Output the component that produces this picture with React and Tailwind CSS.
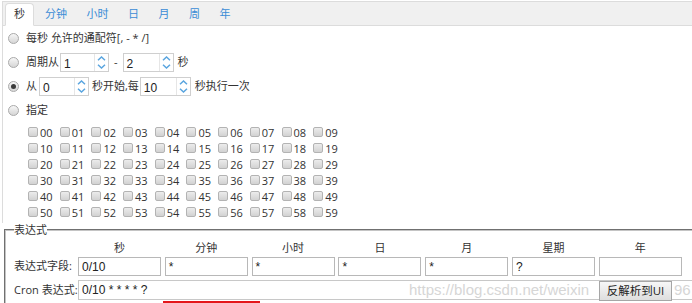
import React from 'react'

const tabs = ['秒', '分钟', '小时', '日', '月', '周', '年']
const fields = [
  { title: '秒', value: '0/10' },
  { title: '分钟', value: '*' },
  { title: '小时', value: '*' },
  { title: '日', value: '*' },
  { title: '月', value: '*' },
  { title: '星期', value: '?' },
  { title: '年', value: '' },
]

function Radio({ checked }) {
  return (
    <span className="flex h-[11px] w-[11px] shrink-0 items-center justify-center rounded-full border border-[#a9a9a9] bg-gradient-to-b from-[#f6f6f6] to-[#d6d6d6]">
      {checked && <span className="h-[5px] w-[5px] rounded-full bg-[#3a3a3a]" />}
    </span>
  )
}

function Spinner({ value, width = 'w-[50px]' }) {
  return (
    <div className={`flex h-[19px] ${width} border border-[#cfcfcf] bg-white`}>
      <span className="flex-1 pl-[3px] pt-[4px] font-['Liberation_Sans',sans-serif] text-[12px] leading-[12px] text-[#222]">
        {value}
      </span>
      <span className="flex w-[14px] flex-col items-center justify-between border-l border-[#e6e6e6] py-[2px]">
        <svg width="9" height="5" viewBox="0 0 9 5" fill="none">
          <path d="M1 4.2 L4.5 1 L8 4.2" stroke="#5aa5df" strokeWidth="1.5" />
        </svg>
        <svg width="9" height="5" viewBox="0 0 9 5" fill="none">
          <path d="M1 0.8 L4.5 4 L8 0.8" stroke="#5aa5df" strokeWidth="1.5" />
        </svg>
      </span>
    </div>
  )
}

function Check({ label }) {
  return (
    <label className="flex h-4 w-[31.7px] shrink-0 items-center gap-[2px]">
      <span className="h-[10px] w-[10px] shrink-0 rounded-[2px] border border-[#b3b3b3] bg-gradient-to-b from-[#ececec] to-[#d2d2d2]" />
      <span className="text-[11px] leading-none">{label}</span>
    </label>
  )
}

function FieldBox({ value }) {
  return (
    <div className="h-[19px] w-[83px] shrink-0 border border-[#b8b8b8] bg-white pl-[3px] pt-[2px] font-['Liberation_Sans',sans-serif] text-[12px] leading-[14px] text-[#222]">
      {value}
    </div>
  )
}

export default function App() {
  const rows = [0, 1, 2, 3, 4, 5]

  return (
    <div className="relative h-[303px] w-[692px] overflow-hidden bg-white pl-[2px] pt-[1px] font-['Open_Sans','Noto_Sans_CJK_SC',sans-serif] text-[#333]">
      <div className="h-[222px] w-[720px] border-l border-t border-[#dcdcdc]">
        <div className="flex h-[24px] items-end gap-[2.5px] border-b border-[#dcdcdc] bg-[#f0f0f0] pl-[2px]">
          {tabs.map((t, i) =>
            i === 0 ? (
              <div
                key={t}
                className="-mb-px flex h-[23px] items-center rounded-t-[4px] border border-[#dcdcdc] border-b-white bg-white px-[8px] text-[11px] text-[#333]"
              >
                {t}
              </div>
            ) : (
              <div key={t} className="flex h-[22px] items-center px-[8.5px] text-[11px] text-[#3b8cd6]">
                {t}
              </div>
            )
          )}
        </div>

        <div className="pl-[5px] text-[11px]">
          <div className="flex h-6 items-center gap-[7px]">
            <Radio />
            <span>每秒 允许的通配符[, - * /]</span>
          </div>

          <div className="flex h-6 items-center">
            <Radio />
            <span className="ml-[7px]">周期从</span>
            <div className="ml-[1px]">
              <Spinner value="1" width="w-[49px]" />
            </div>
            <span className="mx-[5px]">-</span>
            <Spinner value="2" width="w-[51px]" />
            <span className="ml-[4px]">秒</span>
          </div>

          <div className="flex h-6 items-center">
            <Radio checked />
            <span className="ml-[7px]">从</span>
            <div className="ml-[2px]">
              <Spinner value="0" />
            </div>
            <span className="ml-[3px]">秒开始,每</span>
            <div className="ml-[1px]">
              <Spinner value="10" width="w-[51px]" />
            </div>
            <span className="ml-[4px]">秒执行一次</span>
          </div>

          <div className="flex h-6 items-center gap-[7px]">
            <Radio />
            <span>指定</span>
          </div>

          <div className="mt-[2px] pl-[20px]">
            {rows.map((r) => (
              <div key={r} className="flex">
                {rows.concat([6, 7, 8, 9]).map((c) => (
                  <Check key={c} label={`${r}${c}`} />
                ))}
              </div>
            ))}
          </div>
        </div>
      </div>

      <fieldset className="ml-[2px] w-[720px] border-2 border-[#c4c4c4] pl-[8px] [border-style:groove]">
        <legend className="h-[14px] text-[11px] leading-[14px]">表达式</legend>

        <div className="mt-[4px] flex h-[14px] items-center text-[11px]">
          <span className="w-[64px] shrink-0" />
          <div className="flex gap-[3.8px]">
            {fields.map((f) => (
              <span key={f.title} className="w-[83px] text-center">
                {f.title}
              </span>
            ))}
          </div>
        </div>

        <div className="mt-[2px] flex items-center text-[11px]">
          <span className="w-[64px] shrink-0">表达式字段:</span>
          <div className="flex gap-[3.8px]">
            {fields.map((f) => (
              <FieldBox key={f.title} value={f.value} />
            ))}
          </div>
        </div>

        <div className="mt-[4px] flex items-center text-[11px]">
          <span className="w-[64px] shrink-0">Cron 表达式:</span>
          <div className="h-[20px] w-[620px] border border-[#c8c8c8] bg-white pl-[3px] pt-[2px] font-['Liberation_Sans',sans-serif] text-[12px] leading-[14px] text-[#222]">
            0/10 * * * * ?
          </div>
        </div>

        <div className="ml-[149px] mt-[1px] h-[10px] w-[97px] border-2 border-[#e4161b]" />
      </fieldset>

      <div className="pointer-events-none absolute left-[409px] top-[281px] font-['Liberation_Sans',sans-serif] text-[15px] leading-[18px] text-[#d6d6d6]">
        https://blog.csdn.net/weixin
      </div>
      <div className="pointer-events-none absolute left-[674px] top-[281px] font-['Liberation_Sans',sans-serif] text-[15px] leading-[18px] text-[#d6d6d6]">
        96
      </div>

      <button className="absolute left-[599px] top-[281px] h-[20px] w-[73px] border border-[#a6a6a6] bg-gradient-to-b from-[#f7f7f7] to-[#dedede] text-[11.5px] leading-[16px] text-[#222]">
        反解析到UI
      </button>
    </div>
  )
}
